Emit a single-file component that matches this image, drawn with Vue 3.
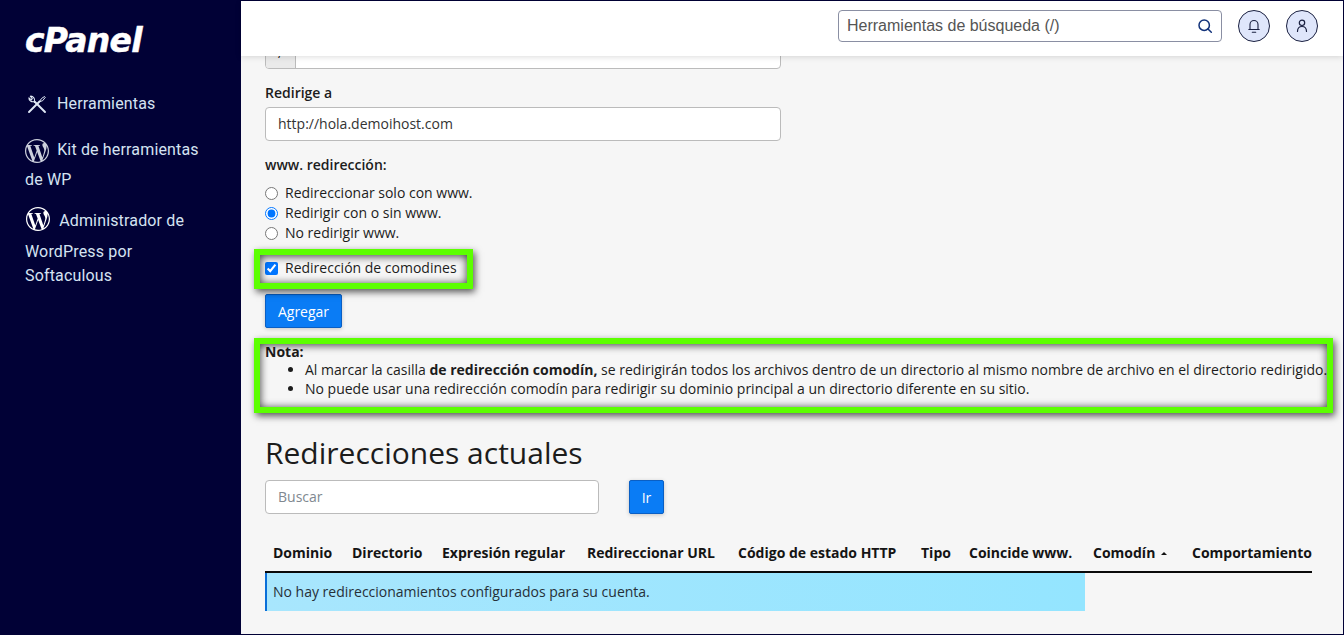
<script setup>
const radios = [
  { label: 'Redireccionar solo con www.', checked: false },
  { label: 'Redirigir con o sin www.', checked: true },
  { label: 'No redirigir www.', checked: false }
]
const columns = ['Dominio', 'Directorio', 'Expresión regular', 'Redireccionar URL', 'Código de estado HTTP', 'Tipo', 'Coincide www.', 'Comodín', 'Comportamiento']
const widths = [79, 90, 145, 151, 183, 48, 124, 99, 128]
const wp = 'M21.469 6.825c.84 1.537 1.318 3.3 1.318 5.175 0 3.979-2.156 7.456-5.363 9.325l3.295-9.527c.615-1.54.82-2.771.82-3.864 0-.405-.026-.78-.07-1.11m-7.981.105c.647-.03 1.232-.105 1.232-.105.582-.075.514-.93-.067-.899 0 0-1.755.135-2.88.135-1.064 0-2.85-.15-2.85-.15-.585-.03-.661.855-.075.885 0 0 .54.061 1.125.09l1.68 4.605-2.37 7.08L5.354 6.9c.649-.03 1.234-.1 1.234-.1.585-.075.516-.93-.065-.896 0 0-1.746.138-2.874.138-.2 0-.438-.008-.69-.015C4.911 3.15 8.235 1.215 12 1.215c2.809 0 5.365 1.072 7.286 2.833-.046-.003-.091-.009-.141-.009-1.06 0-1.812.923-1.812 1.914 0 .89.513 1.643 1.06 2.531.411.72.89 1.643.89 2.977 0 .915-.354 1.994-.821 3.479l-1.075 3.585-3.9-11.61.001.014zM12 22.784c-1.059 0-2.081-.153-3.048-.437l3.237-9.406 3.315 9.087c.024.053.05.101.078.149-1.12.393-2.325.609-3.582.609M1.211 12c0-1.564.336-3.05.935-4.39L7.29 21.709C3.694 19.96 1.212 16.271 1.211 12M12 0C5.385 0 0 5.385 0 12s5.385 12 12 12 12-5.385 12-12S18.615 0 12 0'
</script>

<template>
  <div class="frame">
    <aside class="sidebar">
      <div class="logo">cPanel</div>
      <nav class="nav">
        <a class="item tools">
          <svg class="tool-icon" viewBox="0 0 20 20" width="20" height="20" fill="none" stroke="#dfe8f5" stroke-width="1.500" stroke-linecap="round" stroke-linejoin="round">
            <path d="M18 18 7.500 7.500" stroke-width="1.900" />
            <path d="M7.500 7.500C8.300 4.500 6 1.800 3.300 2.200L5.300 4.700 4.300 5.900 1.900 3.800C1.700 6.500 4.500 8.300 7.500 7.500Z" stroke-width="1.100" />
            <path d="M2 18 12.500 7.500" stroke-width="1.900" />
            <path d="M12.500 7.500 14.500 4.500 17.500 2.500 18.300 3.300 16 6.300Z" stroke-width="1" />
          </svg>
          <span class="tools-label">Herramientas</span>
        </a>
        <a class="item kit">
          <svg class="wp" viewBox="0 0 24 24" width="24" height="24" fill="#ccd0dc"><path :d="wp" /></svg>
          Kit de herramientas de WP
        </a>
        <a class="item admin">
          <svg class="wp wp-bright" viewBox="0 0 24 24" width="24" height="24" fill="#ffffff"><path :d="wp" /></svg>
          Administrador de WordPress por Softaculous
        </a>
      </nav>
    </aside>

    <div class="main">
      <header class="topbar">
        <div class="search">
          <span class="search-text">Herramientas de búsqueda (/)</span>
          <svg viewBox="0 0 16 16" width="16" height="16" fill="none" stroke="#12327a" stroke-width="1.500" stroke-linecap="round">
            <circle cx="7.200" cy="7.200" r="5.200" />
            <path d="m11 11 3.300 3.300" />
          </svg>
        </div>
        <button class="round" aria-label="Notificaciones">
          <svg viewBox="0 0 16 16" width="16" height="16" fill="none" stroke="#1a2040" stroke-width="1.100" stroke-linecap="round" stroke-linejoin="round">
            <path d="M2.800 11.500h10.400M4 11.500V6.500a4 4 0 0 1 8 0v5" />
            <path d="M6.300 14.200h3.400" />
          </svg>
        </button>
        <button class="round" aria-label="Usuario">
          <svg viewBox="0 0 16 16" width="16" height="16" fill="none" stroke="#1a2040" stroke-width="1.200" stroke-linecap="round" stroke-linejoin="round">
            <circle cx="8" cy="4.800" r="2.700" />
            <path d="M3.500 13.500c0-3 1.800-5 4.500-5s4.500 2 4.500 5" />
          </svg>
        </button>
      </header>

      <main class="content">
        <div class="clipped-input">
          <span class="addon">/</span>
        </div>

        <label class="label target-label">Redirige a</label>
        <div class="field">http://hola.demoihost.com</div>

        <label class="label www-label">www. redirección:</label>
        <div class="radios">
          <label v-for="r in radios" :key="r.label" class="choice">
            <input type="radio" name="www" :checked="r.checked" />
            <span>{{ r.label }}</span>
          </label>
        </div>

        <div class="wild">
          <label class="choice">
            <input type="checkbox" checked />
            <span>Redirección de comodines</span>
          </label>
          <span class="mark mark-wild"></span>
        </div>

        <button class="btn add">Agregar</button>

        <section class="note">
          <strong class="note-title">Nota:</strong>
          <ul>
            <li>Al marcar la casilla <b>de redirección comodín,</b> se redirigirán todos los archivos dentro de un directorio al mismo nombre de archivo en el directorio redirigido.</li>
            <li>No puede usar una redirección comodín para redirigir su dominio principal a un directorio diferente en su sitio.</li>
          </ul>
          <span class="mark mark-note"></span>
        </section>

        <h2 class="title">Redirecciones actuales</h2>
        <div class="filter">
          <div class="field filter-field">Buscar</div>
          <button class="btn go">Ir</button>
        </div>

        <table class="table">
          <colgroup>
            <col v-for="(w, i) in widths" :key="i" :style="{ width: w + 'px' }" />
          </colgroup>
          <thead>
            <tr>
              <th v-for="c in columns" :key="c">
                {{ c }}<span v-if="c === 'Comodín'" class="caret"></span>
              </th>
            </tr>
          </thead>
          <tbody>
            <tr>
              <td colspan="7" class="empty">No hay redireccionamientos configurados para su cuenta.</td>
            </tr>
          </tbody>
        </table>
      </main>
    </div>
  </div>
</template>

<style>
html, body { margin: 0; height: 100%; overflow: hidden; }
</style>

<style scoped>
.frame {
  box-sizing: border-box;
  width: 1344px;
  height: 635px;
  display: flex;
  overflow: hidden;
  background: #010136;
  padding: 1px 1px 1px 0;
}
.sidebar {
  width: 241px;
  flex: none;
  box-sizing: border-box;
  padding: 0 25px;
  color: #d5e3f2;
  font: 16px/24px Roboto, sans-serif;
  letter-spacing: 0.16px;
}
.logo {
  margin-top: 23px;
  height: 34px;
  color: #fff;
  font: italic 700 33px/34px "DejaVu Sans", sans-serif;
  letter-spacing: -0.7px;
  -webkit-text-stroke: 0.5px #fff;
}
.nav { margin-top: 34px; }
.item { display: block; }
.tools { display: flex; align-items: center; height: 24px; padding-left: 2px; margin-top: 0; }
.tools-label { margin-left: 10px; }
.kit { margin-top: 19px; line-height: 30px; width: 180px; }
.admin { margin-top: 9px; line-height: 24px; width: 180px; }
.wp { vertical-align: middle; margin-right: 4px; }
.wp-bright { margin: 3px 5px 9px 1px; }
.main {
  flex: 1;
  min-width: 0;
  display: flex;
  flex-direction: column;
  background: #f6f6f6;
  font: 14px/20px "Open Sans", sans-serif;
  color: #1c1c1c;
}
.topbar {
  position: relative;
  z-index: 2;
  height: 55px;
  flex: none;
  box-sizing: border-box;
  background: #fff;
  box-shadow: 0 1px 6px rgba(0, 0, 0, 0.14);
  display: flex;
  align-items: flex-start;
  justify-content: flex-end;
  gap: 16px;
  padding: 9px 25px 0 0;
}
.search {
  box-sizing: border-box;
  width: 384px;
  height: 32px;
  border: 1px solid #8a8fa3;
  border-radius: 4px;
  display: flex;
  align-items: center;
  justify-content: space-between;
  padding: 0 8px;
  font: 16px "Liberation Sans", sans-serif;
  color: #555;
}
.round {
  box-sizing: border-box;
  width: 32px;
  height: 32px;
  padding: 0;
  border: 1px solid #1a2040;
  border-radius: 50%;
  background: #dfe6fb;
  display: flex;
  align-items: center;
  justify-content: center;
}
.content {
  flex: 1;
  min-height: 0;
  overflow: hidden;
  padding-left: 24px;
}
.clipped-input {
  box-sizing: border-box;
  width: 516px;
  height: 34px;
  margin-top: -21px;
  border: 1px solid #bbb;
  border-radius: 4px;
  background: #fff;
  overflow: hidden;
}
.addon {
  display: block;
  box-sizing: border-box;
  width: 30px;
  height: 100%;
  background: #eaeaea;
  border-right: 1px solid #bbb;
  text-align: center;
  line-height: 34px;
}
.label { display: block; font-weight: 600; color: #1c1c1c; }
.target-label { margin-top: 14px; }
.field {
  box-sizing: border-box;
  width: 516px;
  height: 34px;
  margin-top: 4px;
  padding: 6px 12px;
  border: 1px solid #bbb;
  border-radius: 4px;
  background: #fff;
  color: #333;
}
.www-label { margin-top: 14px; }
.radios { margin-top: 8px; display: flex; flex-direction: column; }
.choice { display: flex; align-items: center; height: 20px; gap: 7px; }
.choice input { margin: 0; width: 13px; height: 13px; flex: none; }
.wild { position: relative; margin-top: 15px; height: 20px; }
.btn {
  box-sizing: border-box;
  height: 34px;
  border: 1px solid #0a5fc4;
  border-radius: 2px;
  background: #0a7cf5;
  color: #fff;
  font: 14px "Open Sans", sans-serif;
  padding: 0;
  box-shadow: 0 1px 4px rgba(0, 0, 0, 0.2);
}
.add { display: block; width: 77px; margin-top: 16px; }
.note { position: relative; margin-top: 15px; line-height: 19px; }
.note-title { display: block; line-height: 17px; }
.note ul { margin: 0; padding-left: 40px; }
.note b { font-weight: 700; }
.mark {
  position: absolute;
  box-sizing: border-box;
  border: 6px solid #5cff00;
  box-shadow: 2px 3px 7px rgba(0, 0, 0, 0.65), inset 0 1px 8px rgba(0, 0, 0, 0.8);
  pointer-events: none;
}
.mark-wild { left: -11px; top: -9px; width: 219px; height: 40px; }
.mark-note { left: -11px; top: -5px; width: 1079px; height: 75px; }
.title {
  margin: 36px 0 0;
  font: 400 30px/38px "Open Sans", sans-serif;
  color: #1c1c1c;
}
.filter { display: flex; gap: 30px; margin-top: 8px; }
.filter-field { width: 334px; margin-top: 0; color: #808890; }
.go { width: 35px; }
.table {
  margin-top: 29px;
  border-collapse: separate;
  border-spacing: 0;
  table-layout: fixed;
  width: 1047px;
}
th {
  padding: 0 8px 8px;
  height: 20px;
  text-align: left;
  font-weight: 700;
  white-space: nowrap;
  border-bottom: 2px solid #0a0a0a;
  color: #141414;
}
.caret {
  display: inline-block;
  margin-left: 6px;
  vertical-align: 3px;
  border-left: 3px solid transparent;
  border-right: 3px solid transparent;
  border-bottom: 3px solid #111;
}
.empty {
  box-sizing: border-box;
  height: 38px;
  padding: 0 8px 0 6px;
  border-left: 2px solid #0a6fd8;
  background: linear-gradient(90deg, #a8e6fd, #94e5ff);
  color: #263038;
}
</style>
